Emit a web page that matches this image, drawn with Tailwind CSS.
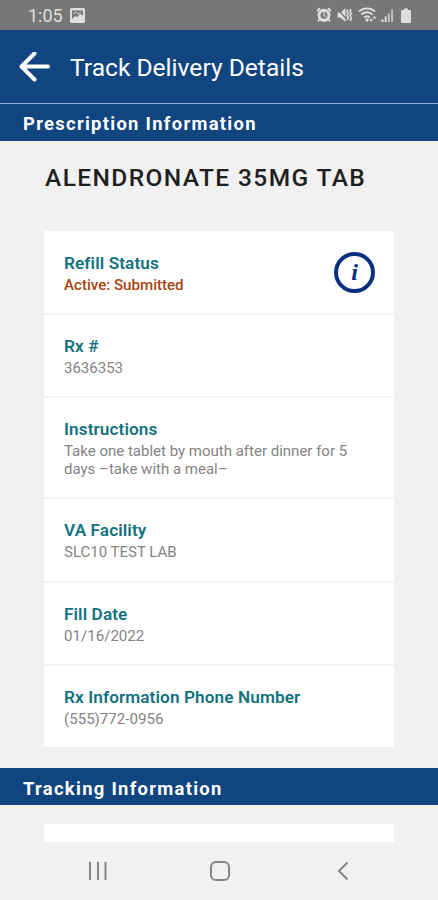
<!DOCTYPE html>
<html lang="en">
<head>
  <meta charset="UTF-8" />
  <meta name="viewport" content="width=device-width, initial-scale=1.0" />
  <title>Track Delivery Details</title>
  <script src="https://cdn.jsdelivr.net/npm/@tailwindcss/browser@4"></script>
</head>
<body class="bg-[#f1f1f1] font-['Roboto',sans-serif]">
  <div class="w-[438px] h-[900px] flex flex-col overflow-hidden">
    <!-- Status bar -->
    <div class="h-[30px] shrink-0 bg-[#777777] text-[#dedede] flex items-center pl-7 pr-[27px]">
      <span class="text-[18px] leading-5 w-[42px] whitespace-nowrap pt-0.5">1:05</span>
      <svg class="w-[15px] h-[15px]" viewBox="0 0 15 15">
        <rect x="0" y="0" width="15" height="15" rx="1.5" fill="currentColor" />
        <path d="M2 2.500h11v5l-3-1.500-3 3-2-1-3 3z" fill="#777777" />
        <path d="M3 6l3-2 2 2 3-2" fill="none" stroke="currentColor" stroke-width="1" />
      </svg>
      <svg class="w-4 h-4 ml-auto" viewBox="0 0 16 16" fill="none" stroke="currentColor">
        <path d="M1 4l3-2.700M15 4l-3-2.700" stroke-width="2" />
        <path d="M3.500 12.500L2 14.500M12.500 12.500L14 14.500" stroke-width="1.800" />
        <circle cx="8" cy="8.300" r="5" stroke-width="3" />
        <path d="M8 5v3.500l2.200 1" stroke-width="1.200" />
      </svg>
      <svg class="w-4 h-4 ml-[5px]" viewBox="0 0 16 16" fill="none" stroke="currentColor">
        <path d="M0.500 5.500h3l5-4.500v14l-5-4.500h-3z" fill="currentColor" stroke="none" />
        <path d="M0.500 1.500l10 12" stroke="#777777" stroke-width="1.200" />
        <path d="M11 2.500l-1 2 1.300 2-1.300 2 1.300 2-1 2.500M14 2l-1 2.500 1.300 2-1.300 2 1.300 2.500-1 3" stroke-width="1.600" />
      </svg>
      <svg class="w-[19px] h-4 ml-[5px]" viewBox="0 0 19 16" fill="none" stroke="currentColor" stroke-width="1.800">
        <path d="M1 4.500c4.500-4.300 11.500-4.300 16 0M3.500 7.500c3.200-3 8-3 11 0M6 10.500c2-1.700 4-1.700 6 0" />
        <circle cx="9" cy="13" r="1.700" fill="currentColor" stroke="none" />
        <path d="M11.500 12l1.700 3 1.700-3zM14.800 11.500l1.700-3 1.700 3z" fill="currentColor" stroke="none" />
      </svg>
      <svg class="w-[13px] h-[14px] ml-[4px]" viewBox="0 0 13 14" fill="currentColor">
        <path d="M0.500 11.500h2V14h-2zM3.700 8.500h2V14h-2z" />
        <path d="M6.900 5.500h2V14h-2zM10.100 1.500h2V14h-2z" opacity="0.700" />
      </svg>
      <svg class="w-[10px] h-[15px] ml-[7px]" viewBox="0 0 10 15" fill="currentColor">
        <path d="M3 0.500h4v1.500h2q1 0 1 1V14q0 1-1 1H1q-1 0-1-1V3q0-1 1-1h2z" />
      </svg>
    </div>

    <!-- App header -->
    <header class="h-[73px] shrink-0 bg-[#11457f] flex items-center pl-[19px] pt-0.5">
      <svg class="w-8 h-8 text-white" viewBox="0 0 32 32" fill="none" stroke="currentColor" stroke-width="4" stroke-linecap="round" stroke-linejoin="round">
        <path d="M29 14.500H3M15.500 1.500L2.500 14.500l13 13" />
      </svg>
      <h1 class="text-[24.6px] leading-8 text-white ml-[19px] pt-px whitespace-nowrap">Track Delivery Details</h1>
    </header>
    <div class="h-[38px] shrink-0 bg-[#11457f] border-t border-[#8fa9c8] flex items-center pl-[23px] pt-0.5">
      <h2 class="text-[18.4px] leading-6 font-bold text-white tracking-[1.3px] whitespace-nowrap">Prescription Information</h2>
    </div>

    <main class="flex-1 min-h-0 overflow-hidden">
      <div class="h-[90px] pl-[45px] pt-[21px]">
        <h3 class="text-[24.5px] leading-8 font-medium text-[#1f1f1f] tracking-[1.4px] whitespace-nowrap">ALENDRONATE 35MG TAB</h3>
      </div>

      <div class="ml-11 w-[350px] bg-white divide-y-2 divide-[#f3f3f3]">
        <div class="h-[84px] pl-5 pr-[19px] flex items-center justify-between">
          <div class="pt-[3px]">
            <h4 class="text-[17.2px] leading-[22px] tracking-[0.1px] font-semibold text-[#14727f]">Refill Status</h4>
            <p class="text-[15.1px] leading-[22px] font-medium text-[#a84411]">Active: Submitted</p>
          </div>
          <div class="w-[41px] h-[41px] rounded-full border-4 border-[#0a2f80] flex items-center justify-center text-[#0a2f80] font-['Liberation_Serif',serif] text-[24px] leading-none font-bold italic">i</div>
        </div>
        <div class="h-[83px] px-5 pt-5">
          <h4 class="text-[17.2px] leading-[22px] tracking-[0.1px] font-semibold text-[#14727f]">Rx #</h4>
          <p class="text-[15px] leading-[22px] text-[#848484]">3636353</p>
        </div>
        <div class="h-[101px] px-5 pt-5">
          <h4 class="text-[17.2px] leading-[22px] tracking-[0.1px] font-semibold text-[#14727f]">Instructions</h4>
          <p class="text-[15px] leading-[18px] pt-0.5 text-[#848484] whitespace-nowrap">Take one tablet by mouth after dinner for 5<br />days –take with a meal–</p>
        </div>
        <div class="h-[84px] px-5 pt-5">
          <h4 class="text-[17.2px] leading-[22px] tracking-[0.1px] font-semibold text-[#14727f]">VA Facility</h4>
          <p class="text-[15px] leading-[22px] text-[#848484]">SLC10 TEST LAB</p>
        </div>
        <div class="h-[83px] px-5 pt-5">
          <h4 class="text-[17.2px] leading-[22px] tracking-[0.1px] font-semibold text-[#14727f]">Fill Date</h4>
          <p class="text-[15.1px] leading-[22px] text-[#848484]">01/16/2022</p>
        </div>
        <div class="h-[81px] px-5 pt-5">
          <h4 class="text-[17.2px] leading-[22px] tracking-[0.1px] font-semibold text-[#14727f]">Rx Information Phone Number</h4>
          <p class="text-[15.1px] leading-[22px] text-[#848484]">(555)772-0956</p>
        </div>
      </div>

      <div class="mt-[21px] h-[37px] bg-[#11457f] flex items-center pl-[23px] pt-1">
        <h2 class="text-[18.4px] leading-6 font-bold text-white tracking-[1.3px] whitespace-nowrap">Tracking Information</h2>
      </div>
      <div class="mt-[19px] ml-11 w-[350px] h-10 bg-white"></div>
    </main>

    <!-- Android navigation -->
    <nav class="h-[58px] shrink-0 bg-[#f1f1f1] text-[#858585] flex items-center pl-[87px]">
      <svg class="w-5 h-5" viewBox="0 0 20 20" fill="none" stroke="currentColor" stroke-width="2">
        <path d="M3 1v18M11 1v18M18.500 1v18" />
      </svg>
      <svg class="w-5 h-5 ml-[103px]" viewBox="0 0 20 20" fill="none" stroke="currentColor" stroke-width="2">
        <rect x="1" y="1" width="18" height="18" rx="5" />
      </svg>
      <svg class="w-3 h-5 ml-[107px]" viewBox="0 0 12 20" fill="none" stroke="currentColor" stroke-width="2">
        <path d="M10.500 1.500L2 10l8.500 8.500" />
      </svg>
    </nav>
  </div>
</body>
</html>
